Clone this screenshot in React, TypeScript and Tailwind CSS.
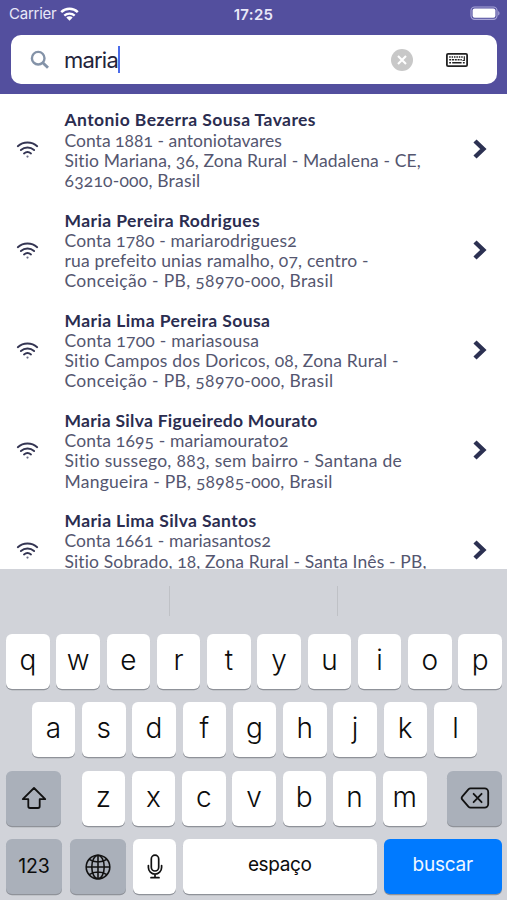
import { type ReactNode } from "react";

type Line = { text: string; tracking: string };
type Customer = { name: Line; details: Line[] };

const customers: Customer[] = [
  {
    name: { text: "Antonio Bezerra Sousa Tavares", tracking: "tracking-[0.42px]" },
    details: [
      { text: "Conta 1881 - antoniotavares", tracking: "tracking-[0.01px]" },
      { text: "Sitio Mariana, 36, Zona Rural - Madalena - CE,", tracking: "tracking-[0.12px]" },
      { text: "63210-000, Brasil", tracking: "tracking-[0.20px]" },
    ],
  },
  {
    name: { text: "Maria Pereira Rodrigues", tracking: "tracking-[0.40px]" },
    details: [
      { text: "Conta 1780 - mariarodrigues2", tracking: "tracking-[0.17px]" },
      { text: "rua prefeito unias ramalho, 07, centro -", tracking: "tracking-[0.19px]" },
      { text: "Conceição - PB, 58970-000, Brasil", tracking: "tracking-[0.33px]" },
    ],
  },
  {
    name: { text: "Maria Lima Pereira Sousa", tracking: "tracking-[0.41px]" },
    details: [
      { text: "Conta 1700 - mariasousa", tracking: "tracking-[0.22px]" },
      { text: "Sitio Campos dos Doricos, 08, Zona Rural -", tracking: "tracking-[0.21px]" },
      { text: "Conceição - PB, 58970-000, Brasil", tracking: "tracking-[0.33px]" },
    ],
  },
  {
    name: { text: "Maria Silva Figueiredo Mourato", tracking: "tracking-[0.28px]" },
    details: [
      { text: "Conta 1695 - mariamourato2", tracking: "tracking-[0.13px]" },
      { text: "Sitio sussego, 883, sem bairro - Santana de", tracking: "tracking-[0.29px]" },
      { text: "Mangueira - PB, 58985-000, Brasil", tracking: "tracking-[0.25px]" },
    ],
  },
  {
    name: { text: "Maria Lima Silva Santos", tracking: "tracking-[0.37px]" },
    details: [
      { text: "Conta 1661 - mariasantos2", tracking: "tracking-[0.05px]" },
      { text: "Sitio Sobrado, 18, Zona Rural - Santa Inês - PB,", tracking: "tracking-[0.13px]" },
    ],
  },
];

function StatusBar() {
  return (
    <div className="grid h-[35px] grid-cols-3 items-start pt-[5px] text-[15px] leading-[18px] text-[#e9e8f8]">
      <div className="flex items-center gap-[4px] pl-[9px]">
        <span className="tracking-[-0.25px]">Carrier</span>
        <svg width="19" height="14" viewBox="0 0 19 14" className="text-white">
          <path d="M1.2 5.2a12 12 0 0 1 16.6 0" fill="none" stroke="currentColor" strokeWidth="2.5" />
          <path d="M4.3 8.6a7.6 7.6 0 0 1 10.4 0" fill="none" stroke="currentColor" strokeWidth="2.3" />
          <path d="M9.5 13.8 6.3 10.5a4.6 4.6 0 0 1 6.4 0z" fill="currentColor" />
        </svg>
      </div>
      <div className="pt-[0.5px] text-center font-semibold tracking-[0.3px]">17:25</div>
      <div className="flex justify-end pt-[1px] pr-[6px]">
        <svg width="31" height="15" viewBox="0 0 31 15">
          <rect x="1" y="1" width="26" height="12.4" rx="3.6" fill="none" stroke="#a9a6d8" strokeWidth="1.1" />
          <rect x="2.6" y="2.6" width="22.8" height="9.2" rx="2" fill="#fff" />
          <path d="M28.2 5v4.6c1.8-.8 1.8-3.8 0-4.6z" fill="#a9a6d8" />
        </svg>
      </div>
    </div>
  );
}

function KeyboardGlyph() {
  return (
    <svg width="22" height="14" viewBox="0 0 22 14" fill="none" stroke="#222" className="shrink-0">
      <rect x="0.9" y="0.9" width="20.2" height="12.2" rx="1.2" strokeWidth="1.8" />
      <path d="M3.2 4h13.6" strokeWidth="1.4" strokeDasharray="1.5 0.9" />
      <path d="M3.2 6.8h12.6" strokeWidth="1.4" strokeDasharray="2 0.8" />
      <path d="M18.3 3.3v4.2h-1.8" strokeWidth="1.2" />
      <path d="M3.2 9.7h1.8M6.2 9.7h9.4M16.9 9.7h1.8" strokeWidth="1.5" />
    </svg>
  );
}

function SearchField() {
  return (
    <div className="mr-[10px] ml-[11px] flex h-[49px] items-center rounded-[10px] bg-white pr-[29px] pl-[19px]">
      <svg width="20" height="20" viewBox="0 0 20 20" fill="none" stroke="#8493a8">
        <circle cx="8.2" cy="8.2" r="6.3" strokeWidth="2.4" />
        <path d="m12.8 12.8 5.2 5" strokeWidth="2.9" />
      </svg>
      <div className="flex flex-1 items-center pl-[14px]">
        <span className="text-[22px] leading-[28px] tracking-[-0.8px] text-[#23233a]">maria</span>
        <span className="h-[27px] w-[2px] bg-[#4a6bea]" />
      </div>
      <svg width="22" height="22" viewBox="0 0 22 22" className="mr-[33px]">
        <circle cx="11" cy="11" r="11" fill="#c8c8c8" />
        <path d="m7 7 8 8M15 7l-8 8" stroke="#fff" strokeWidth="2.1" />
      </svg>
      <KeyboardGlyph />
    </div>
  );
}

function CustomerRow({ customer }: { customer: Customer }) {
  return (
    <li className="flex h-[100.2px] shrink-0 items-start">
      <div className="flex h-[80px] w-[64.5px] shrink-0 items-center pl-[16px]">
        <svg width="23" height="18" viewBox="0 0 23 18" fill="none" stroke="#343553" strokeWidth="1.9" strokeLinecap="round">
          <path d="M1.8 5.2a14.5 14.5 0 0 1 19.4 0" />
          <path d="M4.9 9a10 10 0 0 1 13.2 0" />
          <path d="M8 12.5a5.6 5.6 0 0 1 7 0" />
          <circle cx="11.500" cy="15.600" r="1.100" fill="#6c6d88" stroke="none" />
        </svg>
      </div>
      <div className="min-w-0 flex-1 font-['Lato',sans-serif] text-[17.5px] leading-[20.2px] whitespace-nowrap oldstyle-nums text-[#54566f]">
        <div className={`font-bold text-[#2b2d50] ${customer.name.tracking}`}>{customer.name.text}</div>
        {customer.details.map((line) => (
          <div key={line.text} className={line.tracking}>
            {line.text}
          </div>
        ))}
      </div>
      <div className="flex h-[78px] w-[35.5px] shrink-0 items-center">
        <svg width="16" height="22" viewBox="0 0 16 22" fill="none" stroke="#2c3152" strokeWidth="4.500">
          <path d="m3 3 8.300 8-8.300 8" />
        </svg>
      </div>
    </li>
  );
}

function Key({ children, className }: { children: ReactNode; className: string }) {
  return (
    <div className={`flex h-[55px] items-center justify-center rounded-[6px] shadow-[0_1.3px_0_#8f9299] ${className}`}>
      {children}
    </div>
  );
}

function LetterKeys({ letters }: { letters: string }) {
  return (
    <>
      {letters.split("").map((letter) => (
        <Key key={letter} className="w-[43.5px] bg-white">
          <span className="-mt-[3px] text-[28px] leading-none font-[350]">{letter}</span>
        </Key>
      ))}
    </>
  );
}

function Keyboard() {
  return (
    <div className="flex h-[331px] shrink-0 flex-col bg-[#d1d3d9] text-[#0c0c0c]">
      <div className="flex h-[64.5px] shrink-0 pt-[17px]">
        <div className="h-[30px] w-[169.5px] border-r border-[#bfc1c6]" />
        <div className="h-[30px] w-[168.5px] border-r border-[#bfc1c6]" />
      </div>
      <div className="flex flex-col gap-[13.5px]">
        <div className="flex justify-center gap-[6.75px] pl-[1px]">
          <LetterKeys letters="qwertyuiop" />
        </div>
        <div className="flex justify-center gap-[6.75px] pl-[2px]">
          <LetterKeys letters="asdfghjkl" />
        </div>
        <div className="flex justify-between pr-[5px] pl-[6px]">
          <Key className="w-[55px] bg-[#aab0ba]">
            <svg width="26" height="24" viewBox="0 0 26 24" fill="none" stroke="#111" strokeWidth="1.8" strokeLinejoin="round">
              <path d="M13 2 1.8 13.2h5.500v7.100a1.700 1.700 0 0 0 1.700 1.700h8a1.700 1.700 0 0 0 1.700-1.700v-7.100h5.500z" />
            </svg>
          </Key>
          <div className="flex gap-[6.75px]">
            <LetterKeys letters="zxcvbnm" />
          </div>
          <Key className="w-[55px] bg-[#aab0ba]">
            <svg width="30" height="22" viewBox="0 0 30 22" fill="none" stroke="#111" strokeWidth="1.8" strokeLinejoin="round" strokeLinecap="round">
              <path d="M10.6 1.4h14a3.6 3.6 0 0 1 3.6 3.6v12a3.6 3.6 0 0 1-3.6 3.6h-14a3 3 0 0 1-2.2-.9l-6-7a2.6 2.6 0 0 1 0-3.4l6-7a3 3 0 0 1 2.2-.9z" />
              <path d="m13.6 6.800 8 8.400M21.600 6.800l-8 8.400" />
            </svg>
          </Key>
        </div>
        <div className="flex pl-[6px]">
          <Key className="mr-[8px] w-[56px] bg-[#aab0ba]">
            <span className="text-[19.5px] tracking-[-0.2px]">123</span>
          </Key>
          <Key className="mr-[7px] w-[56px] bg-[#aab0ba]">
            <svg width="26" height="26" viewBox="0 0 26 26" fill="none" stroke="#111" strokeWidth="1.6">
              <circle cx="13" cy="13" r="11.8" />
              <ellipse cx="13" cy="13" rx="6.2" ry="11.8" />
              <path d="M13 1.2v23.600M1.200 13h23.600M4.200 5.400c5 3.400 12.600 3.400 17.600 0M4.200 20.600c5-3.400 12.600-3.400 17.600 0" />
            </svg>
          </Key>
          <Key className="mr-[7px] w-[43px] bg-white">
            <svg width="16" height="25" viewBox="0 0 16 25" fill="none" stroke="#111" strokeWidth="1.7" strokeLinecap="round">
              <rect x="4.300" y="1.200" width="7.400" height="15.800" rx="3.700" />
              <path d="M1.400 11.500v2a6.600 6.600 0 0 0 13.200 0v-2M8 20.200v3.400M4 23.700h8" />
            </svg>
          </Key>
          <Key className="mr-[7px] w-[193.5px] bg-white">
            <span className="-mt-[2px] text-[19px] tracking-[-0.35px]">espaço</span>
          </Key>
          <Key className="w-[118.5px] bg-[#007aff] text-[#f0f7ff]">
            <span className="-mt-[2px] text-[19px] tracking-[-0.2px]">buscar</span>
          </Key>
        </div>
      </div>
    </div>
  );
}

export default function App() {
  return (
    <div className="flex h-[900px] w-[507px] flex-col overflow-hidden bg-white font-['Inter',sans-serif]">
      <header className="h-[94px] shrink-0 bg-[#534f9e]">
        <StatusBar />
        <SearchField />
      </header>
      <ul className="flex h-[475px] shrink-0 flex-col overflow-hidden pt-[16.4px]">
        {customers.map((customer) => (
          <CustomerRow key={customer.name.text} customer={customer} />
        ))}
      </ul>
      <Keyboard />
    </div>
  );
}
